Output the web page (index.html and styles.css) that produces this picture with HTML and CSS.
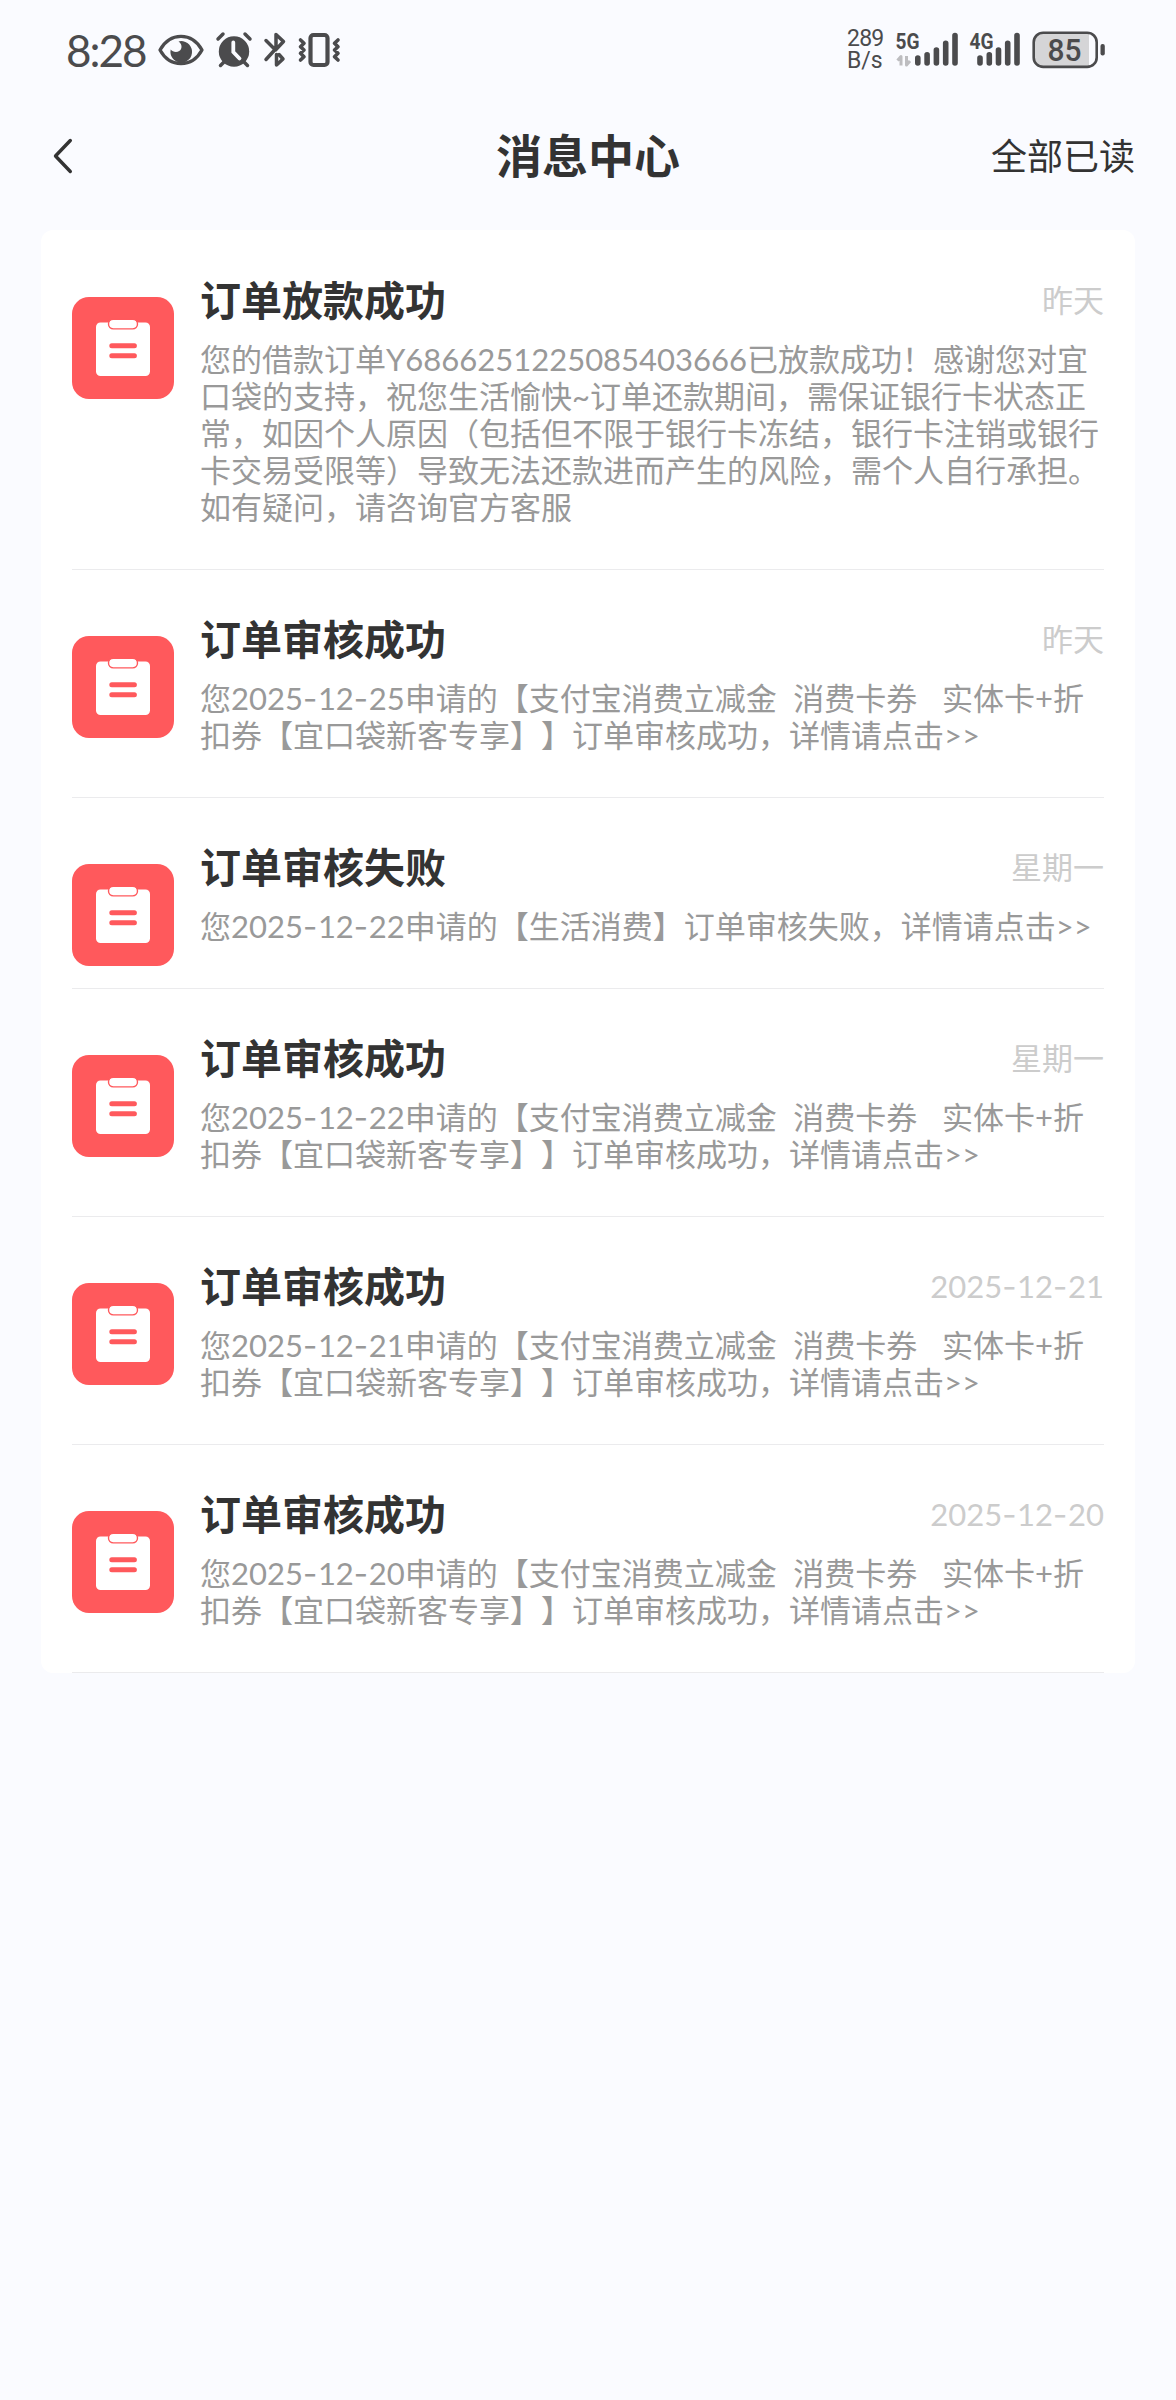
FILE: index.html
```html
<!DOCTYPE html>
<html lang="zh-CN">
<head>
<meta charset="utf-8">
<title>消息中心</title>
<link rel="stylesheet" href="styles.css">
</head>
<body>
<svg class="defs" width="0" height="0" aria-hidden="true">
  <symbol id="clipboard" viewBox="0 0 102 102">
    <rect width="102" height="102" rx="17" fill="#ff595c"/>
    <rect x="24" y="25.500" width="54" height="53.500" rx="4.500" fill="#fff"/>
    <rect x="36.500" y="22.300" width="29" height="9.600" rx="4.800" fill="#fff" stroke="#ff595c" stroke-width="1.400"/>
    <path d="M39.800 48.700h22.600M39.800 58.700h22.600" stroke="#ff595c" stroke-width="5" stroke-linecap="round"/>
  </symbol>
</svg>

<header class="status">
  <div class="status-left">
    <span class="time">8:28</span>
    <svg class="eye" width="46" height="32" viewBox="0 0 46 32" fill="none">
      <path d="M2 16C12-2.200 34-2.200 44 16C34 34.200 12 34.200 2 16Z" stroke="#4b4b4d" stroke-width="3.300" stroke-linejoin="round"/>
      <path d="M20.500 7.400A10.800 10.800 0 1 1 12.700 15.500C15 19 22 19 23.300 14.300C24.200 11 22.500 9 20.500 7.400Z" fill="#4b4b4d"/>
    </svg>
    <svg class="alarm" width="36" height="36" viewBox="0 0 36 36" fill="none" stroke="#4b4b4d" stroke-linecap="round">
      <circle cx="18" cy="19.500" r="15.200" fill="#4b4b4d" stroke="none"/>
      <path d="M2 7l5-5M34 7l-5-5M8 30l-3.500 3.500M28 30l3.500 3.500" stroke-width="3.500"/>
      <path d="M17.300 10.500v9.500l6.200 6.500" stroke="#fafbff" stroke-width="3.800"/>
    </svg>
    <svg class="bluetooth" width="22" height="36" viewBox="0 0 22 36" fill="none" stroke="#4b4b4d" stroke-width="3.500" stroke-linecap="round" stroke-linejoin="round">
      <path d="M2 8.500l9.500 9.500L19.500 9.500 12 2.500v14L2 27.500M12.500 22.500v10.500l6.500-6-4-4.500"/>
    </svg>
    <svg class="vibrate" width="42" height="36" viewBox="0 0 42 36" fill="none" stroke="#4b4b4d" stroke-linecap="round" stroke-linejoin="round">
      <rect x="12.500" y="3" width="17" height="30" rx="3" stroke-width="4.200"/>
      <path d="M2.500 8l3.500 3.300-3.500 3.400 3.500 3.300-3.500 3.300 3.500 3.400-3.500 3.300M40 8L36.500 11.300l3.500 3.400L36.500 18l3.500 3.300-3.500 3.400 3.500 3.300" stroke-width="3.600"/>
    </svg>
  </div>
  <div class="status-right">
    <div class="speed"><span>289</span><span class="unit">B/s</span></div>
    <svg class="signal" width="63" height="36" viewBox="0 0 63 36">
      <text class="net" x="-0.500" y="16.500" textLength="24" lengthAdjust="spacingAndGlyphs">5G</text>
      <path d="M5 33.500v-9l-3.500 4M10.500 24v9l3.500-4" fill="none" stroke="#bdbdc0" stroke-width="3" stroke-linejoin="round"/>
      <path d="M21.800 26v5M31.100 22.700v8.300M40.400 18v13M49.700 11.300v19.700M59 3.500v27.500" stroke="#4b4b4d" stroke-width="5.600" stroke-linecap="round"/>
    </svg>
    <svg class="signal signal-4g" width="51" height="36" viewBox="0 0 51 36">
      <text class="net" x="-0.500" y="16.500" textLength="24" lengthAdjust="spacingAndGlyphs">4G</text>
      <path d="M10 26v5M19.300 22.700v8.300M28.500 18v13M37.700 11.300v19.700M47 3.500v27.500" stroke="#4b4b4d" stroke-width="5.600" stroke-linecap="round"/>
    </svg>
    <svg class="battery" width="74" height="38" viewBox="0 0 74 38">
      <path d="M12 2h45v34H12A10 10 0 0 1 2 26V12A10 10 0 0 1 12 2Z" fill="#d5d5d7"/>
      <rect x="1.700" y="1.700" width="63" height="34.200" rx="9.500" fill="none" stroke="#4b4b4d" stroke-width="2.600"/>
      <rect x="68.500" y="13" width="4.300" height="11.600" rx="2" fill="#4b4b4d"/>
      <text class="level" x="15.500" y="30" textLength="34" lengthAdjust="spacingAndGlyphs">85</text>
    </svg>
  </div>
</header>

<nav class="navbar">
  <svg class="back" width="24" height="38" viewBox="0 0 24 38" fill="none" stroke="#333" stroke-width="3.400" stroke-linecap="round" stroke-linejoin="round">
    <path d="M19.300 3.500L4.500 19l14.800 15.500"/>
  </svg>
  <h1 class="heading">消息中心</h1>
  <span class="read-all">全部已读</span>
</nav>

<main class="card">
  <article class="item">
    <svg class="icon"><use href="#clipboard"/></svg>
    <div class="content">
      <div class="top"><h2 class="title">订单放款成功</h2><time class="date">昨天</time></div>
      <p class="text">您的借款订单Y6866251225085403666已放款成功！感谢您对宜<br>口袋的支持，祝您生活愉快~订单还款期间，需保证银行卡状态正<br>常，如因个人原因（包括但不限于银行卡冻结，银行卡注销或银行<br>卡交易受限等）导致无法还款进而产生的风险，需个人自行承担。<br>如有疑问，请咨询官方客服</p>
    </div>
  </article>
  <article class="item">
    <svg class="icon"><use href="#clipboard"/></svg>
    <div class="content">
      <div class="top"><h2 class="title">订单审核成功</h2><time class="date">昨天</time></div>
      <p class="text">您2025<i>-</i>12<i>-</i>25申请的【支付宝消费立减金  消费卡券   实体卡+折<br>扣券【宜口袋新客专享】】订单审核成功，详情请点击&gt;&gt;</p>
    </div>
  </article>
  <article class="item">
    <svg class="icon"><use href="#clipboard"/></svg>
    <div class="content">
      <div class="top"><h2 class="title">订单审核失败</h2><time class="date">星期一</time></div>
      <p class="text">您2025<i>-</i>12<i>-</i>22申请的【生活消费】订单审核失败，详情请点击&gt;&gt;</p>
    </div>
  </article>
  <article class="item">
    <svg class="icon"><use href="#clipboard"/></svg>
    <div class="content">
      <div class="top"><h2 class="title">订单审核成功</h2><time class="date">星期一</time></div>
      <p class="text">您2025<i>-</i>12<i>-</i>22申请的【支付宝消费立减金  消费卡券   实体卡+折<br>扣券【宜口袋新客专享】】订单审核成功，详情请点击&gt;&gt;</p>
    </div>
  </article>
  <article class="item">
    <svg class="icon"><use href="#clipboard"/></svg>
    <div class="content">
      <div class="top"><h2 class="title">订单审核成功</h2><time class="date">2025<i>-</i>12<i>-</i>21</time></div>
      <p class="text">您2025<i>-</i>12<i>-</i>21申请的【支付宝消费立减金  消费卡券   实体卡+折<br>扣券【宜口袋新客专享】】订单审核成功，详情请点击&gt;&gt;</p>
    </div>
  </article>
  <article class="item">
    <svg class="icon"><use href="#clipboard"/></svg>
    <div class="content">
      <div class="top"><h2 class="title">订单审核成功</h2><time class="date">2025<i>-</i>12<i>-</i>20</time></div>
      <p class="text">您2025<i>-</i>12<i>-</i>20申请的【支付宝消费立减金  消费卡券   实体卡+折<br>扣券【宜口袋新客专享】】订单审核成功，详情请点击&gt;&gt;</p>
    </div>
  </article>
</main>
</body>
</html>
```
FILE: styles.css
```css
* { box-sizing: border-box; }
body {
  margin: 0;
  min-height: 2400px;
  background: #fafbff;
  color: #333;
  font-family: Lato, "Noto Sans CJK SC", sans-serif;
  text-spacing-trim: space-all;
}
svg { display: block; flex: none; overflow: visible; }
.defs { position: absolute; }
h1, h2, p { margin: 0; }

.status {
  display: flex;
  justify-content: space-between;
  align-items: center;
  height: 100px;
  padding: 0 70px 0 66px;
  color: #4b4b4d;
}
.status-left, .status-right { display: flex; align-items: center; }
.time { width: 92px; font-size: 44px; line-height: 50px; letter-spacing: -2px; white-space: nowrap; }
.alarm { margin-left: 12px; }
.bluetooth { margin-left: 12px; }
.vibrate { margin-left: 12px; }
.speed {
  display: flex;
  flex-direction: column;
  width: 49px;
  font: 23px/22px Roboto, sans-serif;
  letter-spacing: -0.800px;
}
.unit { letter-spacing: 0; }
.signal-4g { margin-left: 11px; }
.battery { margin-left: 11px; }
.net { font: 700 22px Roboto, sans-serif; fill: #4b4b4d; }
.level { font: 500 31px Roboto, sans-serif; fill: #4b4b4d; }

.navbar {
  display: grid;
  grid-template-columns: 1fr auto 1fr;
  align-items: center;
  height: 112px;
  padding: 0 41px 0 51px;
}
.heading { font-size: 46px; line-height: 60px; font-weight: 700; margin-left: -10px; }
.read-all { justify-self: end; font-size: 36px; line-height: 50px; }

.card {
  margin: 18px 41px 0;
  padding: 1px 31px 0;
  border-radius: 12px;
  background: #fff;
}
.item {
  display: flex;
  gap: 26px;
  padding: 42px 0 43px;
  border-bottom: 1px solid #ebebed;
}
.icon { width: 102px; height: 102px; margin-top: 24px; margin-bottom: -24px; }
.content { flex: 1; min-width: 0; }
.top { display: flex; justify-content: space-between; align-items: center; height: 56px; }
.title { font-size: 41px; line-height: 56px; font-weight: 700; }
.date { padding-bottom: 2px; font-size: 31px; line-height: 37px; color: #ccc; }
.text {
  margin-top: 12px;
  font-size: 31px;
  line-height: 37px;
  color: #999;
  white-space: pre;
  word-spacing: 0.300px;
}
.text i, .date i { font-family: Inter, sans-serif; font-style: normal; letter-spacing: 0.700px; }
```
